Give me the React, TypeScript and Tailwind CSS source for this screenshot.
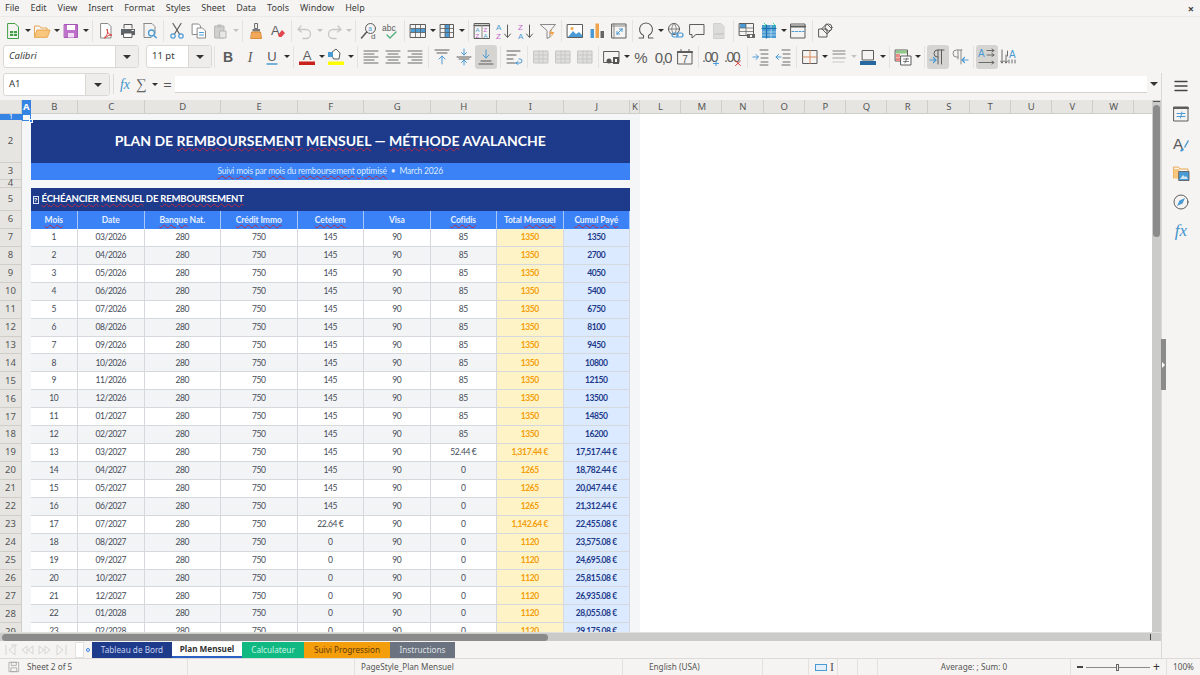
import React from "react";

const Ic = ({ children, s = 18 }: { children: React.ReactNode; s?: number }) => (
  <svg width={s} height={s} viewBox="0 0 18 18" fill="none" strokeLinecap="round" strokeLinejoin="round">
    {children}
  </svg>
);

const Btn = ({ children, on }: { children: React.ReactNode; on?: boolean }) => (
  <div className={on ? "w-[22px] h-[24px] shrink-0 flex items-center justify-center rounded-[3px] bg-[#d6d4d0]" : "w-[22px] h-[24px] shrink-0 flex items-center justify-center"}>
    {children}
  </div>
);

const Dd = ({ off }: { off?: boolean }) => (
  <div className="w-[7px] shrink-0 flex justify-center">
    <div className={off ? "w-0 h-0 shrink-0 border-x-[3px] border-x-transparent border-t-[3px] border-t-[#c4c3c0]" : "w-0 h-0 shrink-0 border-x-[3px] border-x-transparent border-t-[3px] border-t-[#2e2e2e]"} />
  </div>
);

const Sep = ({ w }: { w?: boolean }) => (
  <div className={w ? "w-[6px] shrink-0 flex justify-center" : "w-[5px] shrink-0 flex justify-center"}>
    <div className="w-px h-[22px] bg-[#e4e3e0]" />
  </div>
);

const B = "#4a9ad4";
const G = "#5c5c5c";
const L = "#8a8a8a";

const tool1 = (
  <>
    <Btn><Ic><path d="M4 1.500h7l3.500 3.500v11.500H4z" stroke="#43a047" /><path d="M6 9h7v5H6z" fill="#43a047" /><path d="M6 11.500h7M9.500 9v5" stroke="#fff" strokeWidth=".7" /></Ic></Btn><Dd />
    <Btn><Ic><path d="M1.500 15V4h5l1.500 2h6v2" stroke="#e8a850" /><path d="M1.500 15l2.500-7h13l-2.500 7z" fill="#f8c67c" stroke="#e8a850" /></Ic></Btn><Dd />
    <Btn><Ic><path d="M2.500 2.500h13v13h-13z" fill="#bd6fc9" stroke="#a654b5" /><path d="M5 3h8v5H5z" fill="#fff" /><path d="M6 11h6v4.500H6z" fill="#f1ddf4" /></Ic></Btn><Dd />
    <Sep w />
    <Btn><Ic><path d="M4 1.500h7l3 3v11.500H4z" stroke={L} fill="#fff" /><path d="M8 15c3-2 3-6 2-8 0 3 2 6 5 6-3 0-5 1-7 3z" stroke="#d9413b" /></Ic></Btn>
    <Btn><Ic><path d="M5 6V2.500h8V6" stroke={G} /><path d="M2 7h14v6H2z" fill="#5f6468" /><path d="M5 11h8v4.500H5z" fill="#fff" stroke={G} /><path d="M13 8.500h1.500" stroke="#fff" /></Ic></Btn>
    <Btn><Ic><path d="M3 1.500h8l3 3v7M3 1.500v14h7" stroke={L} /><circle cx="10.500" cy="11" r="3" stroke={B} strokeWidth="1.300" /><path d="M12.700 13.200l2.600 2.600" stroke={B} strokeWidth="1.400" /></Ic></Btn>
    <Sep />
    <Btn><Ic><path d="M5 1.500l6.500 10.500M13 1.500L6.500 12" stroke={G} strokeWidth="1.200" /><circle cx="5" cy="14" r="2.200" stroke={B} strokeWidth="1.200" /><circle cx="13" cy="14" r="2.200" stroke={B} strokeWidth="1.200" /></Ic></Btn>
    <Btn><Ic><path d="M2.500 2h6l2 2v8.500h-8z" stroke={L} fill="#fff" /><path d="M7.500 6h5l3 3v7h-8z" stroke={L} fill="#fff" /><path d="M9.500 10.500h4M9.500 13h4" stroke={B} /></Ic></Btn>
    <Btn><Ic><path d="M3 4h9v12H3z" fill="#d0d0ce" stroke="#b5b5b3" /><path d="M5.500 2.500h4v3h-4z" fill="#bcbcba" /><path d="M8 9h6v7H8z" fill="#e8e8e6" stroke="#b5b5b3" /></Ic></Btn><Dd off />
    <Sep w />
    <Btn><Ic><path d="M8 1.500h2.500v5H8z" stroke="#6b6b6b" /><path d="M5.500 7h7.500v2.500H5.500z" fill="#7a7a7a" /><path d="M5 10h8.500l1 6.500H4z" fill="#f4a95a" stroke="#d98a3a" /></Ic></Btn>
    <Btn><Ic><text x="2" y="13" fontSize="13" fontFamily="Liberation Sans" fill={G}>A</text><path d="M9 13l4-5 3 3-3.500 4H10z" fill="#e2484d" /></Ic></Btn>
    <Sep />
    <Btn><Ic><path d="M5 4L2 7.500 5.500 10" stroke="#c8c7c4" strokeWidth="1.300" /><path d="M2.500 7.500H10a4.500 4.500 0 0 1 0 9H7" stroke="#c8c7c4" strokeWidth="1.300" /></Ic></Btn><Dd off />
    <Btn><Ic><path d="M13 4l3 3.500L12.500 10" stroke="#c8c7c4" strokeWidth="1.300" /><path d="M15.500 7.500H8a4.500 4.500 0 0 0 0 9h3" stroke="#c8c7c4" strokeWidth="1.300" /></Ic></Btn><Dd off />
    <Sep w />
    <Btn><Ic><circle cx="10.500" cy="6.500" r="5" stroke={G} /><path d="M6.700 10L1.500 16" stroke={G} strokeWidth="1.600" /><text x="8.300" y="8.500" fontSize="6.500" fontFamily="Liberation Sans" fill={B}>a</text><text x="11" y="17" fontSize="8" fontFamily="Liberation Sans" fill={G}>d</text></Ic></Btn>
    <Btn><Ic><text x="0" y="9" fontSize="8.500" fontFamily="Liberation Sans" fill={G}>abc</text><path d="M5 13l3 3 6-6" stroke="#4caf7a" strokeWidth="1.300" /></Ic></Btn>
    <Sep />
    <Btn><Ic><path d="M1.500 2.500h15v13h-15z" stroke={G} /><path d="M2 6.500h14v4H2z" fill={B} /><path d="M1.500 6.500h15M1.500 10.500h15M6.500 2.500v13M11.500 2.500v13" stroke={G} strokeWidth=".8" /></Ic></Btn><Dd />
    <Btn><Ic><path d="M2.500 2.500h13v13h-13z" stroke={G} /><path d="M7 3h4.500v12H7z" fill={B} /><path d="M2.500 6.500h13M2.500 10.500h13M7 2.500v13M11.500 2.500v13" stroke={G} strokeWidth=".8" /></Ic></Btn><Dd />
    <Sep w />
    <Btn><Ic><path d="M1.500 1.500h15v15h-15z" stroke={G} /><path d="M1.500 3.500h15" stroke={G} strokeWidth="1.600" /><path d="M9 3.500v13" stroke={L} /><text x="2.500" y="10" fontSize="6" fontFamily="Liberation Sans" fill={B}>A</text><text x="2.500" y="16" fontSize="6" fontFamily="Liberation Sans" fill="#c264c9">Z</text><text x="10.500" y="10" fontSize="6" fontFamily="Liberation Sans" fill="#c264c9">Z</text><text x="10.500" y="16" fontSize="6" fontFamily="Liberation Sans" fill={B}>A</text></Ic></Btn>
    <Btn><Ic><text x="1" y="8" fontSize="8" fontFamily="Liberation Sans" fill={B}>A</text><text x="1" y="16.500" fontSize="8" fontFamily="Liberation Sans" fill="#c264c9">Z</text><path d="M12.500 3v12M9.500 12l3 3.500 3-3.500" stroke={G} /></Ic></Btn>
    <Btn><Ic><text x="1" y="8" fontSize="8" fontFamily="Liberation Sans" fill="#c264c9">Z</text><text x="1" y="16.500" fontSize="8" fontFamily="Liberation Sans" fill={B}>A</text><path d="M12.500 3v12M9.500 12l3 3.500 3-3.500" stroke={G} /></Ic></Btn>
    <Btn><Ic><path d="M1.500 2.500h15L11 9v6l-3 1.500V9z" stroke={L} /><path d="M13 7l-3 5h3l-1.500 4 4-6h-3z" fill="#eea44c" /></Ic></Btn>
    <Sep />
    <Btn><Ic><path d="M1.500 2.500h15v13h-15z" stroke={G} fill="#fff" /><path d="M2 15l5-6 3 3 3-2 3 3v2z" fill={B} /><circle cx="6" cy="6.500" r="1.600" fill="#f0a94e" /></Ic></Btn>
    <Btn><Ic><path d="M2.500 7h3.500v9H2.500z" fill={B} /><path d="M7.500 1.500H11V16H7.500z" fill="#eea44c" /><path d="M12.500 9H16v7h-3.500z" fill="#666" /></Ic></Btn>
    <Btn><Ic><path d="M2 2h14v14H2z" stroke={G} /><path d="M2 4h14M4 2v14" stroke={L} /><path d="M7 12l5-5M12 7h-2.500M12 7v2.500M7 12h2.500M7 12v-2.500" stroke={B} /></Ic></Btn>
    <Sep />
    <Btn><Ic><path d="M2 16h4.500v-2.500a6.500 6.500 0 1 1 5 0V16H16" stroke={G} strokeWidth="1.100" /></Ic></Btn><Dd />
    <Btn><Ic><circle cx="8" cy="7" r="5.500" stroke={G} /><path d="M2.500 7h11M8 1.500c-3 3-3 8 0 11M8 1.500c3 3 3 8 0 11" stroke={G} strokeWidth=".7" /><rect x="6" y="11" width="6" height="4" rx="2" stroke={B} strokeWidth="1.200" /><rect x="11" y="11" width="6" height="4" rx="2" stroke={B} strokeWidth="1.200" /></Ic></Btn>
    <Btn><Ic><path d="M2 2.500h14v10H8l-4 3.500v-3.500H2z" stroke={G} /></Ic></Btn>
    <Btn><Ic><path d="M4 1.500h7l3 3v12H4z" fill="#dcdcda" stroke="#d0d0ce" /><path d="M5 12h8" stroke="#bebebc" /></Ic></Btn>
    <Sep w />
    <Btn><Ic><path d="M1.500 1.500h14v12h-14z" stroke={G} /><path d="M2 2h6v4H2z" fill={B} /><path d="M1.500 6h14M1.500 9.500h14M8 1.500v12" stroke={G} strokeWidth=".7" /><path d="M9 12h8v4H9z" fill="#666" /><circle cx="13" cy="14" r="1.200" fill="#fff" /></Ic></Btn>
    <Btn><Ic><path d="M2 3h14v13H2z" fill={B} /><path d="M2 6.500h14M2 10h14M2 13h14M6.500 3v13M11 3v13" stroke="#fff" strokeWidth=".5" /><path d="M2 6.500h14M6.500 3v13" stroke="#1f6fa8" strokeWidth="1.200" /><path d="M4 1l2 2-2 2M13 1l2 2-2 2" stroke="#2d7" strokeWidth=".8" /></Ic></Btn><Dd />
    <Btn><Ic><path d="M2 2h14v14H2z" stroke={G} /><path d="M2 4.500h14" stroke={G} strokeWidth="2" /><path d="M3 9.500h12" stroke={B} strokeDasharray="2 1.500" /></Ic></Btn>
    <Sep w />
    <Btn><Ic><path d="M2 7h8v8H2z" stroke={G} /><path d="M10 2l5 5-5 5-5-5z" stroke={G} /><circle cx="11.500" cy="5.500" r="3.500" stroke={G} /></Ic></Btn>
  </>
);

const Lines = ({ kind }: { kind: "l" | "c" | "r" }) => (
  <Ic>
    {[3, 6, 9, 12, 15].map((y, i) => {
      const short = i % 2 === 1;
      const x1 = kind === "l" ? 2 : kind === "c" ? (short ? 4 : 2) : short ? 6 : 2;
      const x2 = kind === "l" ? (short ? 12 : 16) : kind === "c" ? (short ? 14 : 16) : 16;
      return <path key={y} d={`M${x1} ${y}H${x2}`} stroke={G} strokeWidth=".9" />;
    })}
  </Ic>
);

const Merge = () => (
  <Ic>
    <path d="M2 3h14v12H2z" fill="#dededc" stroke="#c4c4c2" />
    <path d="M2 7h14M2 11h14M7 3v12M11 3v12" stroke="#c4c4c2" strokeWidth=".8" />
  </Ic>
);

const tool2 = (
  <>
    <Btn><Ic><text x="9" y="14" textAnchor="middle" fontSize="14" fontWeight="700" fontFamily="Liberation Sans" fill={G}>B</text></Ic></Btn>
    <Btn><Ic><text x="9" y="14" textAnchor="middle" fontSize="14" fontStyle="italic" fontFamily="Liberation Serif" fill={G}>I</text></Ic></Btn>
    <Btn><Ic><text x="9" y="12.500" textAnchor="middle" fontSize="13" fontFamily="Liberation Sans" fill={G}>U</text><path d="M4 16h10" stroke={B} strokeWidth="1.300" /></Ic></Btn><Dd />
    <Sep w />
    <Btn><Ic><text x="9" y="12" textAnchor="middle" fontSize="13" fontFamily="Liberation Sans" fill={G}>A</text><path d="M1 13.500h16v3.500H1z" fill="#c9211e" /></Ic></Btn><Dd />
    <Btn><Ic><path d="M4 5l5-4 4 4-1 6H7z" fill="#fff" stroke={G} /><path d="M1 4h5v5H1z" fill={B} /><path d="M1 13.500h16v3.500H1z" fill="#ffff00" /></Ic></Btn><Dd />
    <Sep w />
    <Btn><Lines kind="l" /></Btn>
    <Btn><Lines kind="c" /></Btn>
    <Btn><Lines kind="r" /></Btn>
    <Sep />
    <Btn><Ic><path d="M2 2h14M4 5h10" stroke={G} /><path d="M9 16V8M6 11l3-3 3 3" stroke={B} /></Ic></Btn>
    <Btn><Ic><path d="M2 9h14M4 11h10" stroke={G} /><path d="M9 1v6M6.500 4.500L9 7l2.500-2.500M9 17v-5M6.500 14.500L9 12l2.500 2.500" stroke={B} /></Ic></Btn>
    <Btn on><Ic><path d="M2 16h14M4 13h10" stroke={G} /><path d="M9 2v8M6 7l3 3 3-3" stroke={B} /></Ic></Btn>
    <Sep w />
    <Btn><Ic><path d="M2 3h13M2 7h9M2 11h6M2 15h8" stroke={G} /><path d="M10 12h4a2 2 0 0 0 0-4h-1M10 12l2-1.500M10 12l2 1.500" stroke={B} transform="translate(1 3)" /></Ic></Btn>
    <Sep />
    <Btn><Merge /></Btn>
    <Btn><Merge /></Btn>
    <Btn><Merge /></Btn>
    <Sep />
    <Btn><Ic><path d="M1 3.500h15v11H1z" stroke={G} /><circle cx="6" cy="13" r="2.500" fill="#555" /><path d="M10 9h6v7h-6z" fill="#555" /><path d="M12 11h2v3h-2z" fill="#fff" /></Ic></Btn><Dd />
    <Btn><Ic><text x="9" y="14.500" textAnchor="middle" fontSize="15" fontFamily="Liberation Sans" fill={G}>%</text></Ic></Btn>
    <Btn><Ic><text x="9" y="14.500" textAnchor="middle" fontSize="15" fontFamily="Liberation Sans" letterSpacing="-1.500" fill={G}>0,0</text></Ic></Btn>
    <Btn><Ic><path d="M2 3.500h14v12.500H2z" stroke={G} /><path d="M2 4h14" stroke={G} strokeWidth="2" /><path d="M5 1.500v3M13 1.500v3" stroke={G} /><text x="9" y="14.500" textAnchor="middle" fontSize="10" fontFamily="Liberation Sans" fill={G}>7</text></Ic></Btn>
    <Sep />
    <Btn><Ic><text x="-1" y="13.500" fontSize="14" fontFamily="Liberation Sans" letterSpacing="-1.500" fill={G}>.00</text><path d="M13 13v5M10.500 15.500h5" stroke={B} /></Ic></Btn>
    <Btn><Ic><text x="-1" y="13.500" fontSize="14" fontFamily="Liberation Sans" letterSpacing="-1.500" fill={G}>.00</text><path d="M10.500 13l5 4.500M15.500 13l-5 4.500" stroke="#d9413b" /></Ic></Btn>
    <Sep />
    <Btn><Ic><path d="M8 2h8M9 6h7M9 10h7M9 14h7M8 17h8" stroke={G} strokeWidth=".9" /><path d="M1 9h5M4 6.500L6.500 9 4 11.500" stroke={B} /></Ic></Btn>
    <Btn><Ic><path d="M8 2h8M9 6h7M9 10h7M9 14h7M8 17h8" stroke={G} strokeWidth=".9" /><path d="M7 9H2M4.500 6.500L2 9l2.500 2.500" stroke={B} /></Ic></Btn>
    <Sep />
    <Btn><Ic><path d="M2 2.500h14v13H2z" stroke={G} /><path d="M9 2.500v13M2 9h14" stroke="#d98a5a" /></Ic></Btn><Dd />
    <Btn><Ic><path d="M3 3h12M3 6h12" stroke="#a5a5a3" strokeWidth="1.300" /><path d="M3 10h12" stroke="#bcbcba" strokeWidth="1.500" /><path d="M3 14h12" stroke="#c4c4c2" strokeDasharray="2 1" /></Ic></Btn><Dd off />
    <Btn><Ic><path d="M3.500 2.500h11V12h-11z" stroke={G} /><path d="M1 13h16v4H1z" fill="#26689f" /></Ic></Btn><Dd />
    <Sep w />
    <Btn><Ic><path d="M1.500 2h12v11h-12z" stroke={G} /><path d="M2 2.500h11v3H2z" fill="#8fc98a" /><path d="M2 6h4v3H2z" fill="#e98b85" /><path d="M2 9.500h4V13H2z" fill="#e98b85" /><path d="M7 8h10v9H7z" fill="#fff" stroke={G} /><path d="M9.500 11h5M9.500 13.500h5M13 10l-2 5" stroke={G} strokeWidth=".8" /></Ic></Btn><Dd />
    <Sep w />
    <Btn on><Ic><path d="M9 16V2M12.500 16V2M15 2H8.500a3.500 3.500 0 0 0 0 7H9" stroke={G} /><path d="M1 12h6M4.500 9.500L7 12l-2.500 2.500" stroke={B} strokeWidth="1.200" /></Ic></Btn>
    <Btn><Ic><path d="M7 11V2M10 16V2M11 2H5.500a3.500 3.500 0 0 0 0 7H7" stroke={L} /><path d="M17 12h-6M13.500 9.500L11 12l2.500 2.500" stroke={B} strokeWidth="1.200" /></Ic></Btn>
    <Sep />
    <Btn on><Ic><text x="0" y="9" fontSize="10" fontFamily="Liberation Sans" fill={B}>A</text><path d="M9 2.500h7M9 7h7M14 1l2 1.500L14 4M14 5.500L16 7l-2 1.500" stroke={G} strokeWidth=".9" /><path d="M1 14.500h15M14 13l2 1.500L14 16" stroke={G} strokeWidth=".9" /></Ic></Btn>
    <Btn><Ic><text x="9" y="10" fontSize="10" fontFamily="Liberation Sans" fill={B}>A</text><path d="M2 2v13M0.500 13L2 15l1.500-2M6 7v8M4.500 13L6 15l1.500-2M9 12v3M12 12v3M15 12v3" stroke={G} strokeWidth=".9" /><path d="M7.500 3v5" stroke={G} strokeWidth=".9" /></Ic></Btn>
  </>
);

const colHeads: [string, string][] = [
  ["B", "w-[47.5px]"], ["C", "w-[66.5px]"], ["D", "w-[76.5px]"], ["E", "w-[76.5px]"], ["F", "w-[66.5px]"],
  ["G", "w-[66.5px]"], ["H", "w-[66.5px]"], ["I", "w-[66.5px]"], ["J", "w-[66.5px]"], ["K", "w-[10px]"],
  ["L", "w-[41.2px]"], ["M", "w-[41.2px]"], ["N", "w-[41.2px]"], ["O", "w-[41.2px]"], ["P", "w-[41.2px]"], ["Q", "w-[41.2px]"],
  ["R", "w-[41.2px]"], ["S", "w-[41.2px]"], ["T", "w-[41.2px]"], ["U", "w-[41.2px]"], ["V", "w-[41.2px]"], ["W", "w-[41.2px]"],
];

const cellW = ["w-[47.5px]", "w-[66.5px]", "w-[76.5px]", "w-[76.5px]", "w-[66.5px]", "w-[66.5px]", "w-[66.5px]", "w-[66.5px]", "w-[66.5px]"];

type Row = (string | number)[];
const rows: Row[] = [];
const dates1 = ["03/2026", "04/2026", "05/2026", "06/2026", "07/2026", "08/2026", "09/2026", "10/2026", "11/2026", "12/2026", "01/2027", "02/2027"];
dates1.forEach((d, i) => rows.push([i + 1, d, 280, 750, 145, 90, 85, 1350, 1350 * (i + 1)]));
rows.push(
  [13, "03/2027", 280, 750, 145, 90, "52.44 €", "1,317.44 €", "17,517.44 €"],
  [14, "04/2027", 280, 750, 145, 90, 0, 1265, "18,782.44 €"],
  [15, "05/2027", 280, 750, 145, 90, 0, 1265, "20,047.44 €"],
  [16, "06/2027", 280, 750, 145, 90, 0, 1265, "21,312.44 €"],
  [17, "07/2027", 280, 750, "22.64 €", 90, 0, "1,142.64 €", "22,455.08 €"],
  [18, "08/2027", 280, 750, 0, 90, 0, 1120, "23,575.08 €"],
  [19, "09/2027", 280, 750, 0, 90, 0, 1120, "24,695.08 €"],
  [20, "10/2027", 280, 750, 0, 90, 0, 1120, "25,815.08 €"],
  [21, "12/2027", 280, 750, 0, 90, 0, 1120, "26,935.08 €"],
  [22, "01/2028", 280, 750, 0, 90, 0, 1120, "28,055.08 €"],
  [23, "02/2028", 280, 750, 0, 90, 0, 1120, "29,175.08 €"]
);

const W = ({ children }: { children: React.ReactNode }) => (
  <span className="underline decoration-wavy decoration-[#b82a46] decoration-[0.6px] underline-offset-[1px]">{children}</span>
);

const RowHead = ({ n, h }: { n: number; h: string }) => (
  <div className={`${h} w-[22px] shrink-0 flex items-center justify-center bg-[#e6e5e2] border-r border-b border-[#cfcec9] text-[9.5px] text-[#555] font-['Noto_Sans',sans-serif]`}>{n}</div>
);

const Spacer = () => <div className="w-[8.5px] shrink-0 bg-[#f5f6f8]" />;

const heads: React.ReactNode[] = [
  <W>Mois</W>, "Date", <><W>Banque</W> Nat.</>, <><W>Crédit</W> <W>Immo</W></>, <W>Cetelem</W>, "Visa", <W>Cofidis</W>, <>Total <W>Mensuel</W></>, <><W>Cumul</W> <W>Payé</W></>,
];

function Table() {
  return (
    <div className="relative flex-1 h-[532px] overflow-hidden bg-white font-['Lato',sans-serif]">
      <div className="flex h-[14px] font-['Noto_Sans',sans-serif]">
        <div className="w-[22px] shrink-0 bg-[#e6e5e2] border-r border-b border-[#cfcec9]" />
        <div className="w-[8.5px] shrink-0 bg-[#3584e4] text-white text-[9.5px] font-bold flex items-center justify-center">A</div>
        {colHeads.map(([c, w]) => (
          <div key={c} className={`${w} shrink-0 bg-[#e6e5e2] border-r border-b border-[#cfcec9] flex items-center justify-center pt-[1px] pl-[1px] text-[9.5px] text-[#555]`}>{c}</div>
        ))}
        <div className="flex-1 bg-[#e6e5e2] border-b border-[#cfcec9]" />
      </div>

      <div className="flex h-[6px]">
        <div className="h-[6px] w-[22px] shrink-0 flex items-center justify-center bg-[#3584e4] text-[7px] text-white font-['Noto_Sans',sans-serif]">1</div>
        <div className="w-[618px] shrink-0 bg-[#f5f6f8]" />
      </div>

      <div className="flex h-[43px]">
        <RowHead n={2} h="h-[43px]" />
        <Spacer />
        <div className="w-[599.5px] shrink-0 bg-[#1e3a8a] flex items-center justify-center pb-[2px] text-white text-[14px] font-bold">
          <span>PLAN DE <W>REMBOURSEMENT</W> <W>MENSUEL</W> — <W>MÉTHODE</W> AVALANCHE</span>
        </div>
        <div className="w-[10px] shrink-0 bg-[#f5f6f8]" />
      </div>

      <div className="flex h-[17px]">
        <RowHead n={3} h="h-[17px]" />
        <Spacer />
        <div className="w-[599.5px] shrink-0 bg-[#3b82f6] flex items-center justify-center pb-[1px] text-[#dbeafe] text-[8.5px] tracking-[-0.2px]">
          <span><W>Suivi</W> <W>mois</W> par <W>mois</W> du <W>remboursement</W> <W>optimisé</W> &nbsp;•&nbsp; March 2026</span>
        </div>
        <div className="w-[10px] shrink-0 bg-[#f5f6f8]" />
      </div>

      <div className="flex h-[8px]">
        <RowHead n={4} h="h-[8px]" />
        <div className="w-[618px] shrink-0 bg-[#f5f6f8]" />
      </div>

      <div className="flex h-[23px]">
        <RowHead n={5} h="h-[23px]" />
        <Spacer />
        <div className="w-[599.5px] shrink-0 bg-[#1e3a8a] flex items-center pl-[2px] text-white text-[9.5px] tracking-[-0.18px] font-bold">
          <span className="w-[6px] h-[8px] border border-[#dbe4f8] text-[6px] leading-[6px] text-center mr-[3px] font-['Liberation_Sans',sans-serif]">?</span>
          <span><W>ÉCHÉANCIER</W> <W>MENSUEL</W> DE <W>REMBOURSEMENT</W></span>
        </div>
        <div className="w-[10px] shrink-0 bg-[#f5f6f8]" />
      </div>

      <div className="flex h-[18px]">
        <RowHead n={6} h="h-[18px]" />
        <Spacer />
        {heads.map((h, i) => (
          <div key={i} className={`${cellW[i]} shrink-0 bg-[#3b82f6] border-r border-[#a9c8fa] flex items-center justify-center text-[#e6efff] text-[8.5px] font-bold tracking-[-0.1px]`}>
            <span>{h}</span>
          </div>
        ))}
        <div className="w-[10px] shrink-0 bg-[#f5f6f8]" />
      </div>

      {rows.map((r, idx) => (
        <div key={idx} className="flex h-[17.93px]">
          <RowHead n={idx + 7} h="h-[17.93px]" />
          <Spacer />
          {r.map((v, i) => {
            const bg = idx % 2 === 0 ? "bg-white" : "bg-[#f3f4f6]";
            const cls =
              i === 7
                ? "bg-[#fef3c7] text-[#f59e0b] font-bold"
                : i === 8
                ? "bg-[#dbeafe] text-[#1e3a8a] font-bold"
                : `${bg} text-[#454c58]`;
            return (
              <div key={i} className={`${cellW[i]} shrink-0 ${cls} border-r border-b border-[#d5d8dc] flex items-center justify-center text-[8.5px] tracking-[-0.4px]`}>
                {v}
              </div>
            );
          })}
          <div className="w-[10px] shrink-0 bg-[#f5f6f8]" />
        </div>
      ))}

      <div className="absolute left-[22px] top-[14px] w-[9px] h-[7px] border border-[#3584e4]" />
      <div className="absolute left-[29px] top-[19px] w-[4px] h-[4px] bg-[#3584e4] border border-white" />
    </div>
  );
}

const SideIcons = () => (
  <div className="w-[39px] shrink-0 h-[585px] border-l border-[#d9d8d5] flex flex-col items-center pt-[4px]">
    <div className="h-[17px] flex items-center"><Ic><path d="M3 4.500h12M3 9h12M3 13.500h12" stroke="#444" strokeWidth="1.400" /></Ic></div>
    <div className="h-[30px] mt-[5px] flex items-center"><Ic><path d="M2 2h14v14H2z" stroke={G} /><path d="M2 3h14" stroke={G} strokeWidth="2" /><path d="M5 8.500h8M5 11.500h8M10 7l-1.500 6" stroke={B} /></Ic></div>
    <div className="h-[29px] flex items-center"><Ic><text x="1" y="14" fontSize="15" fontFamily="Liberation Sans" fill={G}>A</text><path d="M8 16c1-3 3-3 4-2-.5 2-2 3-4 2zM12 12l4-7 1 1-4 7z" fill={B} /></Ic></div>
    <div className="h-[29px] flex items-center"><Ic><path d="M1.500 14V3h5l1.500 2h8v2" stroke="#e8a850" /><path d="M1.500 5h6v9.500h-6z" fill="#f8c67c" /><path d="M7 7.500h10v9H7z" fill="#4a9ad4" stroke="#555" strokeWidth=".8" /><path d="M8 15l3-4 2 2 1-1 2 3z" fill="#cfe5f5" /></Ic></div>
    <div className="h-[29px] flex items-center"><Ic><circle cx="9" cy="9" r="7" stroke={G} /><path d="M13 5l-2.500 5.500L5 13l2.500-5.500z" fill={B} /></Ic></div>
    <div className="h-[29px] flex items-center"><span className="font-['Liberation_Serif',serif] italic text-[#3f93cc] text-[17px] leading-none">fx</span></div>
  </div>
);

const Combo = ({ w, label, italic, btn }: { w: string; label: string; italic?: boolean; btn: string }) => (
  <div className={`${w} h-[23px] shrink-0 flex bg-white border border-[#d9d8d5] rounded-[3px]`}>
    <span className={italic ? "flex-1 flex items-center pl-[5px] italic text-[9.5px]" : "flex-1 flex items-center pl-[5px] text-[9.5px]"}>{label}</span>
    <div className={`${btn} flex items-center justify-center bg-[#eeedeb] border-l border-[#d9d8d5] rounded-r-[3px]`}>
      <div className="w-0 h-0 border-x-[4px] border-x-transparent border-t-[4px] border-t-[#333]" />
    </div>
  </div>
);

const NavArrows = () => (
  <svg width="62" height="14" viewBox="0 0 62 14" fill="none" stroke="#d6d5d2">
    <path d="M1 2v10M10 2L4 7l6 5zM12 2l-6 0" />
    <path d="M22 3l-5 4 5 4zM28 3l-5 4 5 4z" />
    <path d="M34 3l5 4-5 4zM40 3l5 4-5 4z" />
    <path d="M52 2l6 5-6 5zM61 2v10" />
  </svg>
);

export default function App() {
  return (
    <div className="w-[1200px] h-[675px] overflow-hidden flex flex-col bg-[#f5f4f2] font-['Noto_Sans',sans-serif] text-[#3c3c3c]">
      <div className="h-[17px] shrink-0 flex items-center pl-[5px] pr-[6px] text-[9px] gap-[11px] border-b border-[#ebeae7]">
        {["File", "Edit", "View", "Insert", "Format", "Styles", "Sheet", "Data", "Tools", "Window", "Help"].map((m) => (
          <span key={m}>{m}</span>
        ))}
        <span className="ml-auto text-[11px] font-bold leading-none text-[#444]">×</span>
      </div>

      <div className="h-[27px] shrink-0 flex items-center pl-[2px]">{tool1}</div>

      <div className="h-[29px] shrink-0 flex items-start pt-[1px] pl-[3px]">
        <Combo w="w-[136px] mr-[7px]" label="Calibri" italic btn="w-[23px]" />
        <Combo w="w-[66px]" label="11 pt" btn="w-[23px]" />
        <div className="flex items-center h-[23px]">
          <Sep />
          {tool2}
        </div>
      </div>

      <div className="h-[585px] shrink-0 flex">
        <div className="w-[1161px] shrink-0 flex flex-col">
          <div className="h-[27px] shrink-0 flex items-start pl-[3px]">
            <Combo w="w-[107px]" label="A1" btn="w-[24px]" />
            <div className="w-px h-[20px] ml-[3px] mt-[1px] bg-[#dcdbd8]" />
            <span className="w-[20px] ml-[1px] h-[22px] flex items-center justify-center font-['Liberation_Serif',serif] italic text-[#3f93cc] text-[14px]">fx</span>
            <span className="w-[12px] h-[22px] flex items-center justify-center font-['Liberation_Serif',serif] text-[#666] text-[15px]">∑</span>
            <div className="h-[22px] flex items-center w-[15px] justify-center"><div className="w-0 h-0 border-x-[3px] border-x-transparent border-t-[3px] border-t-[#2e2e2e]" /></div>
            <span className="w-[11px] h-[22px] flex items-center justify-center text-[15px] text-[#555]">=</span>
            <div className="w-[972px] h-[17px] ml-[2px] mt-[3px] shrink-0 bg-white border-b border-[#d4d3d0]" />
            <div className="flex-1 h-[22px] flex items-center justify-center"><div className="w-0 h-0 border-x-[4px] border-x-transparent border-t-[4px] border-t-[#333]" /></div>
          </div>

          <div className="h-[532px] shrink-0 flex">
            <Table />
            <div className="w-[9px] shrink-0 bg-[#cbcbca] flex flex-col items-center">
              <div className="w-[7px] h-[1px] mt-[1px] bg-[#555]" />
              <div className="w-[7px] h-[132px] mt-[3px] rounded-full bg-[#8b8b8b]" />
            </div>
          </div>

          <div className="h-[9px] shrink-0 bg-[#cbcbca] flex items-center justify-between pl-[2px] pr-[10px] border-t border-[#e0dfdc]">
            <div className="w-[546px] h-[7px] rounded-full bg-[#8b8b8b]" />
            <div className="w-[1px] h-[6px] bg-[#444]" />
          </div>

          <div className="h-[17px] shrink-0 flex items-stretch pt-[1px] text-[8.2px]">
            <div className="w-[75px] shrink-0 flex items-center pl-[5px]"><NavArrows /></div>
            <div className="w-[9px] shrink-0 bg-white border border-[#e3e2df]" />
            <div className="w-[8px] shrink-0 flex items-center justify-center"><div className="w-[4px] h-[4px] rounded-full border border-[#3584e4]" /></div>
            <div className="w-[80px] shrink-0 bg-[#1e3a8a] text-[#c5d2f0] flex items-center justify-center">Tableau de Bord</div>
            <div className="w-[70px] shrink-0 bg-white text-[#333] font-bold flex items-center justify-center border-b-2 border-[#2b5fc4]">Plan Mensuel</div>
            <div className="w-[62px] shrink-0 bg-[#10b981] text-[#c9f3e3] flex items-center justify-center">Calculateur</div>
            <div className="w-[86px] shrink-0 bg-[#f59e0b] text-[#5f3a04] flex items-center justify-center">Suivi Progression</div>
            <div className="w-[65px] shrink-0 bg-[#6b7280] text-[#dfe1e5] flex items-center justify-center">Instructions</div>
          </div>
        </div>
        <div className="relative">
          <SideIcons />
          <div className="absolute left-0 top-[266px] w-[5px] h-[51px] bg-[#8b8b8b] flex items-center justify-center">
            <div className="w-0 h-0 border-y-[3px] border-y-transparent border-l-[3px] border-l-white" />
          </div>
        </div>
      </div>

      <div className="h-[17px] shrink-0 flex items-center border-t border-[#dcdbd8] text-[8.2px] text-[#555]">
        <div className="w-[27px] shrink-0 flex justify-center"><Ic s={14}><path d="M3 3h12v12H3z" stroke="#a3a3a1" /><path d="M6 3h6v4H6zM5.500 10h7v5h-7z" stroke="#a3a3a1" /></Ic></div>
        <div className="w-[161px] shrink-0 h-full flex items-center border-r border-[#e2e1de]">Sheet 2 of 5</div>
        <div className="w-[167px] shrink-0 h-full border-r border-[#e2e1de]" />
        <div className="w-[268px] shrink-0 h-full flex items-center pl-[6px] border-r border-[#e2e1de]">PageStyle_Plan Mensuel</div>
        <div className="w-[140px] shrink-0 h-full flex items-center border-r border-[#e2e1de] pl-[26px]">English (USA)</div>
        <div className="w-[46px] shrink-0 h-full border-r border-[#e2e1de]" />
        <div className="w-[29px] shrink-0 h-full flex items-center gap-[3px] border-r border-[#e2e1de] pl-[6px]">
          <div className="w-[12px] h-[7px] border border-[#4a9ad4] bg-[#e3f0f9]" />
          <span className="text-[12px] font-['Liberation_Serif',serif] leading-none">I</span>
        </div>
        <div className="w-[20px] shrink-0 h-full border-r border-[#e2e1de]" />
        <div className="w-[20px] shrink-0 h-full border-r border-[#e2e1de]" />
        <div className="w-[193px] shrink-0 h-full flex items-center justify-center border-r border-[#e2e1de]">Average: ; Sum: 0</div>
        <div className="w-[96px] shrink-0 h-full flex items-center justify-center gap-[3px] border-r border-[#e2e1de]">
          <div className="w-[6px] h-[1.5px] bg-[#444]" />
          <div className="relative w-[64px] h-px bg-[#8a8a8a]">
            <div className="absolute left-[30px] -top-[3px] w-[3px] h-[7px] bg-[#eee] border border-[#666]" />
          </div>
          <span className="text-[12px] leading-none text-[#333]">+</span>
        </div>
        <div className="flex-1 text-center">100%</div>
      </div>
    </div>
  );
}
